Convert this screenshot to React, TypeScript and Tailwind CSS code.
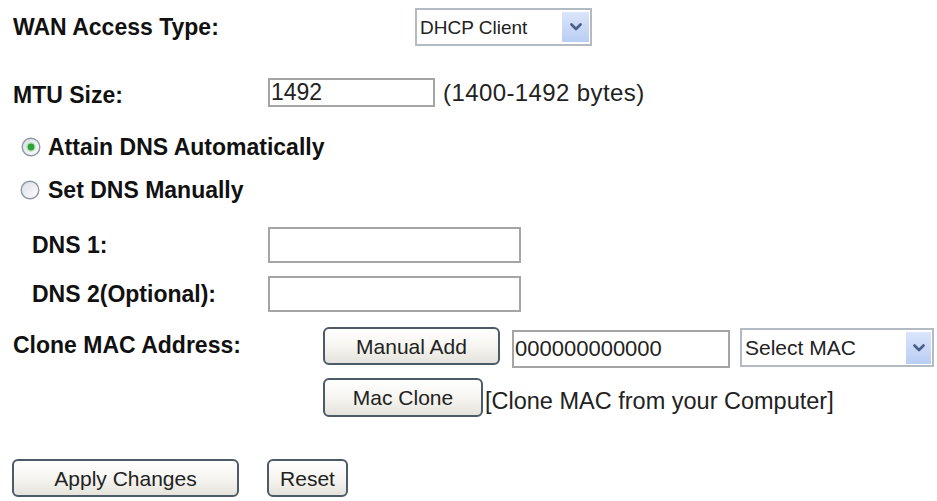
import React from "react";

const font = { fontFamily: '"Liberation Sans", Arial, sans-serif' };

function Chevron() {
  return (
    <svg width="12" height="8" viewBox="0 0 12 8">
      <path d="M1.5 1.5 L6 6 L10.5 1.5" fill="none" stroke="#4a5e8b" strokeWidth="2.6" strokeLinecap="round" strokeLinejoin="round" />
    </svg>
  );
}

function Radio({ checked }: { checked: boolean }) {
  return (
    <svg width="20" height="20" viewBox="0 0 20 20" className="shrink-0">
      <defs>
        <linearGradient id={checked ? "rg1" : "rg2"} x1="0" y1="0" x2="1" y2="1">
          <stop offset="0" stopColor="#d9dde2" />
          <stop offset="1" stopColor="#ffffff" />
        </linearGradient>
      </defs>
      <circle cx="10" cy="10" r="8.8" fill={`url(#${checked ? "rg1" : "rg2"})`} stroke="#8d98a5" strokeWidth="1.4" />
      {checked && (
        <>
          <circle cx="10" cy="10" r="5" fill="#bfe9bb" />
          <circle cx="10" cy="10" r="3.4" fill="#2e9f39" />
        </>
      )}
    </svg>
  );
}

function Button({ label, w }: { label: string; w: string }) {
  return (
    <div
      className={`${w} h-full shrink-0 border-2 border-[#4d5a67] rounded-[6px] bg-linear-to-b from-[#ffffff] via-[#f6f5f1] to-[#e4e3dc] flex items-center justify-center text-[21px] leading-none text-[#222]`}
    >
      {label}
    </div>
  );
}

export default function App() {
  return (
    <div style={font} className="w-[937px] h-[501px] bg-white text-[#111] pt-[8px] pl-[13px] flex flex-col overflow-hidden">
      {/* WAN Access Type */}
      <div className="flex items-center h-[38px]">
        <div className="w-[402px] shrink-0 font-bold text-[23px] leading-none">WAN Access Type:</div>
        <div className="w-[177px] h-[38px] border-2 border-[#b3bac3] bg-white flex items-center pr-[1px]">
          <span className="flex-1 pl-[3px] text-[19px] leading-none text-[#222]">DHCP Client</span>
          <div className="w-[27px] h-[30px] bg-linear-to-b from-[#dbe5fb] to-[#b9cdf4] flex items-center justify-center">
            <Chevron />
          </div>
        </div>
      </div>

      {/* MTU */}
      <div className="flex items-center h-[29px] mt-[32px]">
        <div className="w-[255px] shrink-0 font-bold text-[23px] leading-none mt-[6px]">MTU Size:</div>
        <div className="w-[167px] h-[29px] border-2 border-[#a5a5a5] bg-white flex items-center pl-[1px] text-[23px] leading-none text-[#222]">
          1492
        </div>
        <span className="ml-[8px] text-[24px] tracking-[0.4px] leading-none text-[#222]">(1400-1492 bytes)</span>
      </div>

      {/* Radios */}
      <div className="flex items-center h-[20px] mt-[30px] pl-[8px]">
        <Radio checked />
        <span className="ml-[7px] font-bold text-[23px] leading-none">Attain DNS Automatically</span>
      </div>
      <div className="flex items-center h-[20px] mt-[23px] pl-[7px]">
        <Radio checked={false} />
        <span className="ml-[8px] font-bold text-[23px] leading-none">Set DNS Manually</span>
      </div>

      {/* DNS 1 */}
      <div className="flex items-center h-[36px] mt-[27px] pl-[19px]">
        <div className="w-[236px] shrink-0 font-bold text-[23px] leading-none">DNS 1:</div>
        <div className="w-[253px] h-[36px] border-2 border-[#a5a5a5] bg-white" />
      </div>
      {/* DNS 2 */}
      <div className="flex items-center h-[36px] mt-[13px] pl-[19px]">
        <div className="w-[236px] shrink-0 font-bold text-[23px] leading-none">DNS 2(Optional):</div>
        <div className="w-[253px] h-[36px] border-2 border-[#a5a5a5] bg-white" />
      </div>

      {/* Clone MAC */}
      <div className="flex items-start h-[41px] mt-[15px]">
        <div className="w-[310px] shrink-0 font-bold text-[23px] leading-none mt-[7px]">Clone MAC Address:</div>
        <div className="h-[38px] flex">
          <Button label="Manual Add" w="w-[177px]" />
        </div>
        <div className="ml-[12px] mt-[3px] w-[218px] h-[38px] border-2 border-[#a5a5a5] bg-white flex items-center pl-[1px] text-[22px] leading-none text-[#222]">
          000000000000
        </div>
        <div className="ml-[10px] mt-[1px] w-[194px] h-[39px] border-2 border-[#b3bac3] bg-white flex items-center pr-[1px]">
          <span className="flex-1 pl-[3px] text-[21px] leading-none text-[#222]">Select MAC</span>
          <div className="w-[25px] h-[32px] bg-linear-to-b from-[#dbe5fb] to-[#b9cdf4] flex items-center justify-center">
            <Chevron />
          </div>
        </div>
      </div>

      {/* Mac Clone */}
      <div className="flex items-center h-[39px] mt-[10px] pl-[310px]">
        <Button label="Mac Clone" w="w-[160px]" />
        <span className="ml-[2px] mt-[8px] text-[23.5px] leading-none text-[#222] whitespace-nowrap">[Clone MAC from your Computer]</span>
      </div>

      {/* Apply / Reset */}
      <div className="flex items-center h-[38px] mt-[42px] -ml-[1px]">
        <Button label="Apply Changes" w="w-[227px]" />
        <div className="ml-[28px] h-full flex">
          <Button label="Reset" w="w-[81px]" />
        </div>
      </div>
    </div>
  );
}
